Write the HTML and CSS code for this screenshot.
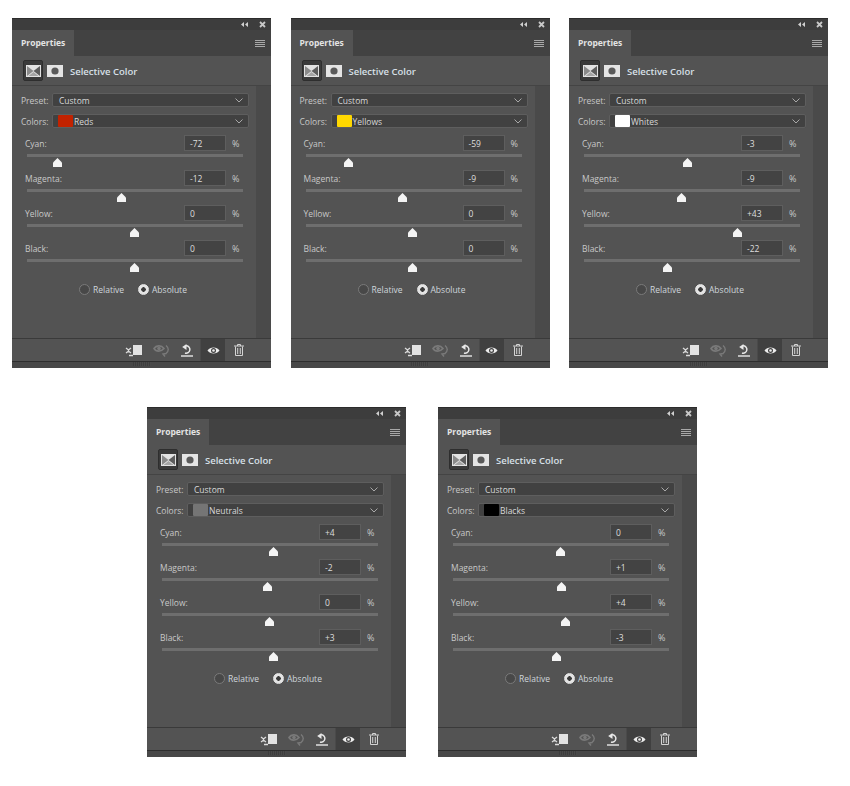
FILE: index.html
```html
<!DOCTYPE html>
<html lang="en">
<head>
<meta charset="utf-8">
<title>Selective Color</title>
<link rel="stylesheet" href="styles.css">
</head>
<body>
<svg class="defs" width="0" height="0" aria-hidden="true">
  <symbol id="i-collapse" viewBox="0 0 7 5"><path d="M3 0 0 2.500 3 5ZM7 0 4 2.500 7 5Z" fill="#d0d0d0"/></symbol>
  <symbol id="i-close" viewBox="0 0 7 7"><path d="M1 1 6 6M6 1 1 6" stroke="#c8c8c8" stroke-width="1.800"/></symbol>
  <symbol id="i-adj" viewBox="0 0 15 12"><rect width="15" height="12" fill="#e2e2e2"/><path d="M1 1 7.500 6 1 11Z" fill="#8a8a8a"/><path d="M14 1 7.500 6 14 11Z" fill="#5e5e5e"/><path d="M2.500 11 7.500 7 12.500 11Z" fill="#a5a5a5"/></symbol>
  <symbol id="i-mask" viewBox="0 0 16 12"><rect width="16" height="12" fill="#e4e4e4"/><circle cx="8" cy="6" r="3.600" fill="#5a5a5a"/></symbol>
  <symbol id="i-clip" viewBox="0 0 17 13"><rect x="8" y="1" width="9" height="10" fill="#e2e2e2"/><path d="M1 4 3.500 6 6 4M3.500 6v2.500M1 9 3 7.500M6 9 4 7.500" fill="none" stroke="#dcdcdc" stroke-width="1.300"/><path d="M4 11.500h4" stroke="#dcdcdc" stroke-width="1.500"/></symbol>
  <symbol id="i-prev" viewBox="0 0 17 13"><path d="M1 4.500C3 1.500 8 .5 11 4.500 8 8 3 8 1 4.500Z" fill="none" stroke="#7a7a7a" stroke-width="1.600"/><circle cx="6" cy="4.500" r="1.800" fill="#7a7a7a"/><path d="M13 1.500C16 4 16 7 13 9.500M13.500 9.500 10 10l2 2.500" fill="none" stroke="#7a7a7a" stroke-width="1.400"/></symbol>
  <symbol id="i-reset" viewBox="0 0 12 13"><path d="M5 1.800A3.700 3.700 0 1 1 4 9" fill="none" stroke="#e8e8e8" stroke-width="1.500"/><path d="M5.500 0 1.200 3 5.500 6Z" fill="#e8e8e8"/><path d="M0 12H12" stroke="#e8e8e8" stroke-width="1.400"/></symbol>
  <symbol id="i-eye" viewBox="0 0 13 9"><path d="M.5 4.500C3 .5 10 .5 12.500 4.500 10 8.500 3 8.500 .5 4.500Z" fill="#ececec"/><circle cx="6.500" cy="4.500" r="2.500" fill="#404040"/><circle cx="6.500" cy="4.500" r="1.300" fill="#ececec"/></symbol>
  <symbol id="i-trash" viewBox="0 0 10 12"><path d="M0 2H10M3.500 2V.5H6.500V2M1.500 2.500V11.500H8.500V2.500M3.700 4V10M6.300 4V10" fill="none" stroke="#d4d4d4" stroke-width="1"/></symbol>
  <symbol id="i-thumb" viewBox="0 0 11 9"><path d="M5.500 0 10 4.500V9H1V4.500Z" fill="#f4f4f4"/></symbol>
  <symbol id="i-chev" viewBox="0 0 8 5"><path d="M.5.5 4 4 7.500.5" fill="none" stroke="#a8a8a8"/></symbol>
</svg>

<main class="sheet">
<div class="row row-top">

<section class="panel">
  <div class="titlebar"><svg class="collapse"><use href="#i-collapse"/></svg><svg class="close"><use href="#i-close"/></svg></div>
  <div class="tabbar"><div class="tab">Properties</div><div class="menu"><i></i><i></i><i></i><i></i></div></div>
  <div class="head"><span class="adj-box"><svg class="adj"><use href="#i-adj"/></svg></span><svg class="mask"><use href="#i-mask"/></svg><span class="head-title">Selective Color</span></div>
  <div class="main"><div class="form">
    <div class="field"><label class="flabel">Preset:</label><div class="select"><span>Custom</span><svg class="chev"><use href="#i-chev"/></svg></div></div>
    <div class="field"><label class="flabel">Colors:</label><div class="select"><b class="swatch c-red"></b><span>Reds</span><svg class="chev"><use href="#i-chev"/></svg></div></div>
    <div class="slider"><div class="sline"><span class="slabel">Cyan:</span><span class="num">-72</span><span class="pct">%</span></div><div class="track"><svg class="thumb" style="left:30px"><use href="#i-thumb"/></svg></div></div>
    <div class="slider"><div class="sline"><span class="slabel">Magenta:</span><span class="num">-12</span><span class="pct">%</span></div><div class="track"><svg class="thumb" style="left:94px"><use href="#i-thumb"/></svg></div></div>
    <div class="slider"><div class="sline"><span class="slabel">Yellow:</span><span class="num">0</span><span class="pct">%</span></div><div class="track"><svg class="thumb" style="left:107px"><use href="#i-thumb"/></svg></div></div>
    <div class="slider"><div class="sline"><span class="slabel">Black:</span><span class="num">0</span><span class="pct">%</span></div><div class="track"><svg class="thumb" style="left:107px"><use href="#i-thumb"/></svg></div></div>
    <div class="radios"><span class="radio"></span><span class="rlabel">Relative</span><span class="radio on"></span><span class="rlabel">Absolute</span></div>
  </div></div>
  <div class="foot"><svg class="f-clip"><use href="#i-clip"/></svg><svg class="f-prev"><use href="#i-prev"/></svg><svg class="f-reset"><use href="#i-reset"/></svg><span class="f-eye"><svg class="eye"><use href="#i-eye"/></svg></span><svg class="f-trash"><use href="#i-trash"/></svg></div>
  <div class="grip"><span></span></div>
</section>

<section class="panel">
  <div class="titlebar"><svg class="collapse"><use href="#i-collapse"/></svg><svg class="close"><use href="#i-close"/></svg></div>
  <div class="tabbar"><div class="tab">Properties</div><div class="menu"><i></i><i></i><i></i><i></i></div></div>
  <div class="head"><span class="adj-box"><svg class="adj"><use href="#i-adj"/></svg></span><svg class="mask"><use href="#i-mask"/></svg><span class="head-title">Selective Color</span></div>
  <div class="main"><div class="form">
    <div class="field"><label class="flabel">Preset:</label><div class="select"><span>Custom</span><svg class="chev"><use href="#i-chev"/></svg></div></div>
    <div class="field"><label class="flabel">Colors:</label><div class="select"><b class="swatch c-yellow"></b><span>Yellows</span><svg class="chev"><use href="#i-chev"/></svg></div></div>
    <div class="slider"><div class="sline"><span class="slabel">Cyan:</span><span class="num">-59</span><span class="pct">%</span></div><div class="track"><svg class="thumb" style="left:43px"><use href="#i-thumb"/></svg></div></div>
    <div class="slider"><div class="sline"><span class="slabel">Magenta:</span><span class="num">-9</span><span class="pct">%</span></div><div class="track"><svg class="thumb" style="left:97px"><use href="#i-thumb"/></svg></div></div>
    <div class="slider"><div class="sline"><span class="slabel">Yellow:</span><span class="num">0</span><span class="pct">%</span></div><div class="track"><svg class="thumb" style="left:107px"><use href="#i-thumb"/></svg></div></div>
    <div class="slider"><div class="sline"><span class="slabel">Black:</span><span class="num">0</span><span class="pct">%</span></div><div class="track"><svg class="thumb" style="left:107px"><use href="#i-thumb"/></svg></div></div>
    <div class="radios"><span class="radio"></span><span class="rlabel">Relative</span><span class="radio on"></span><span class="rlabel">Absolute</span></div>
  </div></div>
  <div class="foot"><svg class="f-clip"><use href="#i-clip"/></svg><svg class="f-prev"><use href="#i-prev"/></svg><svg class="f-reset"><use href="#i-reset"/></svg><span class="f-eye"><svg class="eye"><use href="#i-eye"/></svg></span><svg class="f-trash"><use href="#i-trash"/></svg></div>
  <div class="grip"><span></span></div>
</section>

<section class="panel">
  <div class="titlebar"><svg class="collapse"><use href="#i-collapse"/></svg><svg class="close"><use href="#i-close"/></svg></div>
  <div class="tabbar"><div class="tab">Properties</div><div class="menu"><i></i><i></i><i></i><i></i></div></div>
  <div class="head"><span class="adj-box"><svg class="adj"><use href="#i-adj"/></svg></span><svg class="mask"><use href="#i-mask"/></svg><span class="head-title">Selective Color</span></div>
  <div class="main"><div class="form">
    <div class="field"><label class="flabel">Preset:</label><div class="select"><span>Custom</span><svg class="chev"><use href="#i-chev"/></svg></div></div>
    <div class="field"><label class="flabel">Colors:</label><div class="select"><b class="swatch c-white"></b><span>Whites</span><svg class="chev"><use href="#i-chev"/></svg></div></div>
    <div class="slider"><div class="sline"><span class="slabel">Cyan:</span><span class="num">-3</span><span class="pct">%</span></div><div class="track"><svg class="thumb" style="left:103px"><use href="#i-thumb"/></svg></div></div>
    <div class="slider"><div class="sline"><span class="slabel">Magenta:</span><span class="num">-9</span><span class="pct">%</span></div><div class="track"><svg class="thumb" style="left:97px"><use href="#i-thumb"/></svg></div></div>
    <div class="slider"><div class="sline"><span class="slabel">Yellow:</span><span class="num">+43</span><span class="pct">%</span></div><div class="track"><svg class="thumb" style="left:153px"><use href="#i-thumb"/></svg></div></div>
    <div class="slider"><div class="sline"><span class="slabel">Black:</span><span class="num">-22</span><span class="pct">%</span></div><div class="track"><svg class="thumb" style="left:83px"><use href="#i-thumb"/></svg></div></div>
    <div class="radios"><span class="radio"></span><span class="rlabel">Relative</span><span class="radio on"></span><span class="rlabel">Absolute</span></div>
  </div></div>
  <div class="foot"><svg class="f-clip"><use href="#i-clip"/></svg><svg class="f-prev"><use href="#i-prev"/></svg><svg class="f-reset"><use href="#i-reset"/></svg><span class="f-eye"><svg class="eye"><use href="#i-eye"/></svg></span><svg class="f-trash"><use href="#i-trash"/></svg></div>
  <div class="grip"><span></span></div>
</section>

</div>
<div class="row row-bottom">

<section class="panel">
  <div class="titlebar"><svg class="collapse"><use href="#i-collapse"/></svg><svg class="close"><use href="#i-close"/></svg></div>
  <div class="tabbar"><div class="tab">Properties</div><div class="menu"><i></i><i></i><i></i><i></i></div></div>
  <div class="head"><span class="adj-box"><svg class="adj"><use href="#i-adj"/></svg></span><svg class="mask"><use href="#i-mask"/></svg><span class="head-title">Selective Color</span></div>
  <div class="main"><div class="form">
    <div class="field"><label class="flabel">Preset:</label><div class="select"><span>Custom</span><svg class="chev"><use href="#i-chev"/></svg></div></div>
    <div class="field"><label class="flabel">Colors:</label><div class="select"><b class="swatch c-gray"></b><span>Neutrals</span><svg class="chev"><use href="#i-chev"/></svg></div></div>
    <div class="slider"><div class="sline"><span class="slabel">Cyan:</span><span class="num">+4</span><span class="pct">%</span></div><div class="track"><svg class="thumb" style="left:111px"><use href="#i-thumb"/></svg></div></div>
    <div class="slider"><div class="sline"><span class="slabel">Magenta:</span><span class="num">-2</span><span class="pct">%</span></div><div class="track"><svg class="thumb" style="left:105px"><use href="#i-thumb"/></svg></div></div>
    <div class="slider"><div class="sline"><span class="slabel">Yellow:</span><span class="num">0</span><span class="pct">%</span></div><div class="track"><svg class="thumb" style="left:107px"><use href="#i-thumb"/></svg></div></div>
    <div class="slider"><div class="sline"><span class="slabel">Black:</span><span class="num">+3</span><span class="pct">%</span></div><div class="track"><svg class="thumb" style="left:111px"><use href="#i-thumb"/></svg></div></div>
    <div class="radios"><span class="radio"></span><span class="rlabel">Relative</span><span class="radio on"></span><span class="rlabel">Absolute</span></div>
  </div></div>
  <div class="foot"><svg class="f-clip"><use href="#i-clip"/></svg><svg class="f-prev"><use href="#i-prev"/></svg><svg class="f-reset"><use href="#i-reset"/></svg><span class="f-eye"><svg class="eye"><use href="#i-eye"/></svg></span><svg class="f-trash"><use href="#i-trash"/></svg></div>
  <div class="grip"><span></span></div>
</section>

<section class="panel">
  <div class="titlebar"><svg class="collapse"><use href="#i-collapse"/></svg><svg class="close"><use href="#i-close"/></svg></div>
  <div class="tabbar"><div class="tab">Properties</div><div class="menu"><i></i><i></i><i></i><i></i></div></div>
  <div class="head"><span class="adj-box"><svg class="adj"><use href="#i-adj"/></svg></span><svg class="mask"><use href="#i-mask"/></svg><span class="head-title">Selective Color</span></div>
  <div class="main"><div class="form">
    <div class="field"><label class="flabel">Preset:</label><div class="select"><span>Custom</span><svg class="chev"><use href="#i-chev"/></svg></div></div>
    <div class="field"><label class="flabel">Colors:</label><div class="select"><b class="swatch c-black"></b><span>Blacks</span><svg class="chev"><use href="#i-chev"/></svg></div></div>
    <div class="slider"><div class="sline"><span class="slabel">Cyan:</span><span class="num">0</span><span class="pct">%</span></div><div class="track"><svg class="thumb" style="left:107px"><use href="#i-thumb"/></svg></div></div>
    <div class="slider"><div class="sline"><span class="slabel">Magenta:</span><span class="num">+1</span><span class="pct">%</span></div><div class="track"><svg class="thumb" style="left:108px"><use href="#i-thumb"/></svg></div></div>
    <div class="slider"><div class="sline"><span class="slabel">Yellow:</span><span class="num">+4</span><span class="pct">%</span></div><div class="track"><svg class="thumb" style="left:112px"><use href="#i-thumb"/></svg></div></div>
    <div class="slider"><div class="sline"><span class="slabel">Black:</span><span class="num">-3</span><span class="pct">%</span></div><div class="track"><svg class="thumb" style="left:103px"><use href="#i-thumb"/></svg></div></div>
    <div class="radios"><span class="radio"></span><span class="rlabel">Relative</span><span class="radio on"></span><span class="rlabel">Absolute</span></div>
  </div></div>
  <div class="foot"><svg class="f-clip"><use href="#i-clip"/></svg><svg class="f-prev"><use href="#i-prev"/></svg><svg class="f-reset"><use href="#i-reset"/></svg><span class="f-eye"><svg class="eye"><use href="#i-eye"/></svg></span><svg class="f-trash"><use href="#i-trash"/></svg></div>
  <div class="grip"><span></span></div>
</section>

</div>
</main>
</body>
</html>
```

FILE: styles.css
```css
* { box-sizing: border-box; }
html, body { margin: 0; padding: 0; background: #fff; }
body { font-family: "Open Sans", "Liberation Sans", sans-serif; font-size: 8.5px; color: #d6d6d6; }
.defs { display: block; height: 0; }
.sheet { padding-top: 18px; height: 786px; overflow: hidden; }
.row { display: flex; height: 350px; }
.row-top { padding-left: 12px; gap: 19.5px; }
.row-bottom { padding-left: 147px; gap: 32px; margin-top: 39px; }

.panel { width: 259px; height: 350px; display: flex; flex-direction: column; background: #535353; border-top: 1px solid #2c2c2c; }
.titlebar { flex: none; height: 11px; background: #3d3d3d; display: flex; justify-content: flex-end; align-items: center; padding-right: 5px; }
.collapse { width: 7px; height: 5px; display: block; margin-right: 11px; }
.close { width: 7px; height: 7px; display: block; }
.tabbar { flex: none; height: 26px; background: #424242; display: flex; justify-content: space-between; align-items: center; padding-right: 6px; }
.tab { width: 62px; height: 26px; background: #535353; font-weight: 700; color: #e4e4e4; font-size: 8.500px; line-height: 25px; padding-left: 9px; }
.menu { display: flex; flex-direction: column; gap: 1px; width: 10px; }
.menu i { display: block; height: 1px; background: #a8a8a8; }

.head { flex: none; height: 30px; display: flex; align-items: center; padding-left: 11px; border-bottom: 1px solid #444; }
.adj-box { width: 20px; height: 21px; background: #3a3a3a; border: 1px solid #2e2e2e; border-radius: 2px; display: flex; align-items: center; justify-content: center; margin-right: 4px; }
.adj { width: 15px; height: 12px; display: block; }
.mask { width: 16px; height: 12px; display: block; }
.head-title { font-weight: 600; font-size: 9.500px; color: #d8e0e8; margin-left: 7px; padding-top: 1px; }

.main { flex: 1; background: #4a4a4a; display: flex; min-height: 0; }
.form { width: 244px; background: #535353; padding-top: 7px; display: flex; flex-direction: column; }
.field { flex: none; display: flex; align-items: center; height: 14px; margin-bottom: 7px; padding-left: 9px; }
.flabel { width: 31px; color: #c8c8c8; }
.select { width: 197px; height: 14px; background: #414141; border: 1px solid #5e5e5e; border-radius: 2px; display: flex; align-items: center; padding-left: 6px; color: #d8d8d8; }
.chev { width: 8px; height: 5px; margin-left: auto; margin-right: 5px; display: block; }
.swatch { width: 15px; height: 12px; border-radius: 1px; margin: 0 1px 0 -1px; display: block; }
.c-red { background: #c22200; }
.c-yellow { background: #ffd800; }
.c-white { background: #fff; }
.c-gray { background: #757575; }
.c-black { background: #000; }

.slider { flex: none; height: 35px; padding-left: 13px; }
.sline { display: flex; align-items: center; height: 16px; }
.slabel { width: 159px; color: #c8c8c8; }
.num { width: 42px; height: 16px; background: #434343; border: 1px solid #5e5e5e; padding-left: 5px; line-height: 15px; color: #dedede; }
.pct { margin-left: 6px; color: #c8c8c8; font-size: 9px; }
.track { height: 3px; width: 216px; margin: 3px 0 0 2px; background: #6e6e6e; position: relative; }
.thumb { position: absolute; top: 4px; width: 11px; height: 9px; margin-left: -5.500px; }

.radios { flex: none; display: flex; align-items: center; margin-top: 8px; padding-left: 67px; height: 12px; }
.radio { width: 11px; height: 11px; border-radius: 50%; background: #484848; border: 1px solid #7a7a7a; }
.radio.on { background: radial-gradient(circle, #3a3a3a 0 2px, #e4e4e4 2.500px); border-color: #e4e4e4; }
.rlabel { margin-left: 3px; width: 45px; color: #cfd6dc; }

.foot { flex: none; height: 24px; border-top: 1px solid #3a3a3a; border-bottom: 1px solid #2e2e2e; background: #535353; display: flex; align-items: center; padding-left: 113px; }
.foot svg { display: block; }
.f-clip { width: 17px; height: 13px; }
.f-prev { width: 17px; height: 13px; margin-left: 11px; }
.f-reset { width: 12px; height: 13px; margin-left: 11px; }
.f-eye { width: 25px; height: 22px; background: #404040; margin-left: 7px; display: flex; align-items: center; justify-content: center; border-left: 1px solid #4a4a4a; }
.eye { width: 13px; height: 9px; }
.f-trash { width: 10px; height: 12px; margin-left: 9px; }
.grip { flex: none; height: 6px; background: #484848; display: flex; justify-content: center; }
.grip span { width: 18px; height: 4px; background: repeating-linear-gradient(90deg, #3e3e3e 0 1px, #4a4a4a 1px 2px); }
```
